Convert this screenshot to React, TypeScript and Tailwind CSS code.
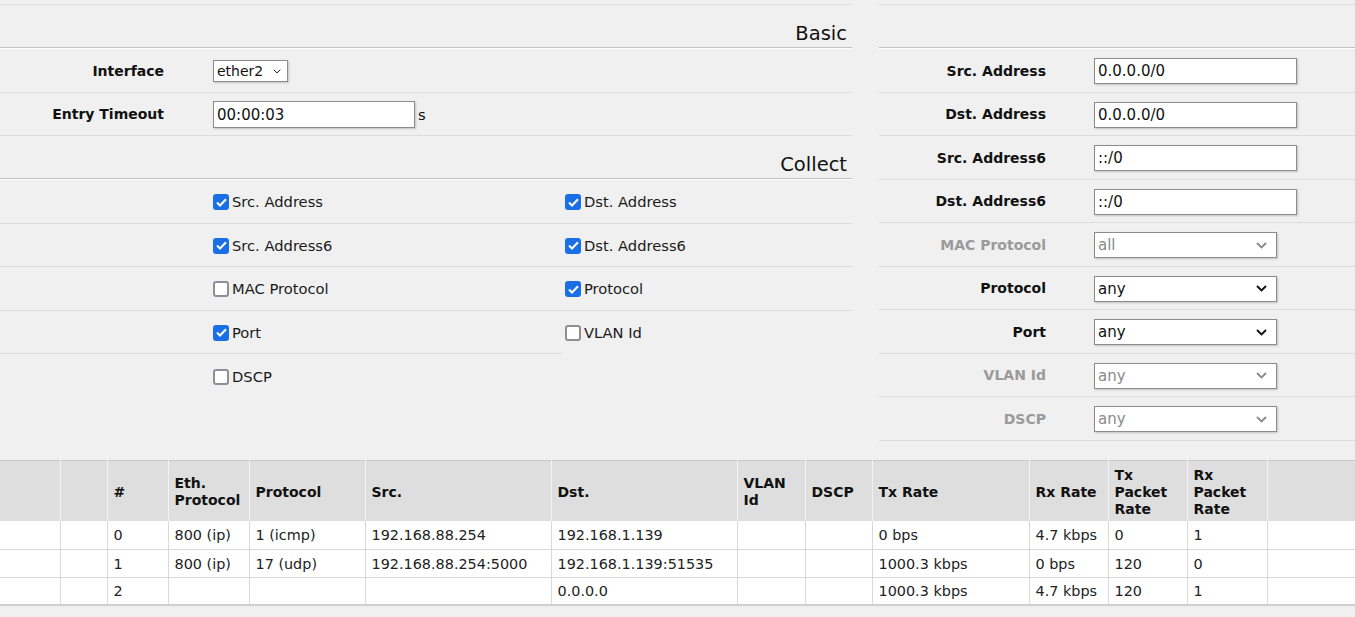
import React from 'react';

const rowCls = 'flex h-[43.5px] items-center border-b border-[#dcdcdc] pt-[2px]';

function Chevron({ muted, thin }: { muted?: boolean; thin?: boolean }) {
  return (
    <svg
      width={thin ? 8 : 11}
      height={thin ? 5 : 7}
      viewBox="0 0 11 7"
      className="shrink-0"
      fill="none"
      stroke={muted ? '#8a8a8a' : '#111'}
      strokeWidth={thin ? 1.4 : 1.9}
    >
      <path d="M1 1 L5.5 5.5 L10 1" />
    </svg>
  );
}

function Select({ value, muted, w, h, thin }: { value: string; muted?: boolean; w: string; h: string; thin?: boolean }) {
  return (
    <div
      className={`flex items-center justify-between border border-[#8c8c8c] bg-white pl-[3px] shadow-[1px_1px_2px_rgba(0,0,0,0.2)] ${
        thin ? 'pr-[6px] text-[14px]' : 'pr-[9px] text-[15px]'
      } ${w} ${h} ${muted ? 'text-[#8a8a8a]' : 'text-[#111]'}`}
    >
      <span>{value}</span>
      <Chevron muted={muted} thin={thin} />
    </div>
  );
}

function TextInput({ value, w, h }: { value: string; w: string; h: string }) {
  return (
    <input
      readOnly
      value={value}
      className={`border border-[#8c8c8c] bg-white px-[3px] text-[15px] text-[#111] shadow-[1px_1px_2px_rgba(0,0,0,0.2)] outline-none ${w} ${h}`}
    />
  );
}

function Check({ on, label }: { on?: boolean; label: string }) {
  return (
    <div className="flex items-center gap-[3px]">
      {on ? (
        <span className="flex h-[16px] w-[16px] items-center justify-center rounded-[3px] bg-[#1a6fe6]">
          <svg width="11" height="9" viewBox="0 0 11 9" fill="none" stroke="#fff" strokeWidth="2">
            <path d="M1 4.5 L4 7.5 L10 1.2" />
          </svg>
        </span>
      ) : (
        <span className="h-[16px] w-[16px] rounded-[3px] border-2 border-[#8e8e98] bg-white" />
      )}
      <span className="text-[14.7px] text-[#1a1a1a]">{label}</span>
    </div>
  );
}

function Heading({ title }: { title?: string }) {
  return (
    <div>
      <div className="flex h-[42px] items-end justify-end pb-[1px] pr-[5px] text-[19.5px] leading-[24px] text-[#111]">
        {title}
      </div>
      <div className="h-px bg-[#c4c4c4]" />
      <div className="h-px bg-white" />
    </div>
  );
}

const rightRows: { label: string; kind: 'input' | 'select'; value: string; muted?: boolean }[] = [
  { label: 'Src. Address', kind: 'input', value: '0.0.0.0/0' },
  { label: 'Dst. Address', kind: 'input', value: '0.0.0.0/0' },
  { label: 'Src. Address6', kind: 'input', value: '::/0' },
  { label: 'Dst. Address6', kind: 'input', value: '::/0' },
  { label: 'MAC Protocol', kind: 'select', value: 'all', muted: true },
  { label: 'Protocol', kind: 'select', value: 'any' },
  { label: 'Port', kind: 'select', value: 'any' },
  { label: 'VLAN Id', kind: 'select', value: 'any', muted: true },
  { label: 'DSCP', kind: 'select', value: 'any', muted: true },
];

const colW = [
  'w-[60px]', 'w-[47px]', 'w-[61px]', 'w-[81px]', 'w-[116px]', 'w-[186px]', 'w-[186px]',
  'w-[68px]', 'w-[67px]', 'w-[157px]', 'w-[79px]', 'w-[79px]', 'w-[80px]', 'w-[88px]',
];

const headers = ['', '', '#', 'Eth. Protocol', 'Protocol', 'Src.', 'Dst.', 'VLAN Id', 'DSCP', 'Tx Rate', 'Rx Rate', 'Tx Packet Rate', 'Rx Packet Rate', ''];

const data = [
  ['0', '800 (ip)', '1 (icmp)', '192.168.88.254', '192.168.1.139', '', '', '0 bps', '4.7 kbps', '0', '1'],
  ['1', '800 (ip)', '17 (udp)', '192.168.88.254:5000', '192.168.1.139:51535', '', '', '1000.3 kbps', '0 bps', '120', '0'],
  ['2', '', '', '', '0.0.0.0', '', '', '1000.3 kbps', '4.7 kbps', '120', '1'],
];

export default function App() {
  return (
    <div className="min-h-screen bg-[#f0f0f0] pt-[4px] font-['DejaVu_Sans',Verdana,sans-serif] text-[14px] text-[#111]">
      <div className="flex items-start">
        {/* Left — Basic + Collect */}
        <div className="w-[852px] border-t border-[#dcdcdc]">
          <Heading title="Basic" />
          <div className={rowCls}>
            <div className="w-[164px] text-right font-bold">Interface</div>
            <div className="ml-[49px]">
              <Select value="ether2" w="w-[75px]" h="h-[22px]" thin />
            </div>
          </div>
          <div className={rowCls}>
            <div className="w-[164px] text-right font-bold">Entry Timeout</div>
            <div className="ml-[49px] flex items-center gap-[3px]">
              <TextInput value="00:00:03" w="w-[202px]" h="h-[27px]" />
              <span className="text-[14.7px]">s</span>
            </div>
          </div>
          <Heading title="Collect" />
          <div className={rowCls}>
            <div className="w-[562px] pl-[213px]"><Check on label="Src. Address" /></div>
            <div className="pl-[3px]"><Check on label="Dst. Address" /></div>
          </div>
          <div className={rowCls}>
            <div className="w-[562px] pl-[213px]"><Check on label="Src. Address6" /></div>
            <div className="pl-[3px]"><Check on label="Dst. Address6" /></div>
          </div>
          <div className={rowCls}>
            <div className="w-[562px] pl-[213px]"><Check label="MAC Protocol" /></div>
            <div className="pl-[3px]"><Check on label="Protocol" /></div>
          </div>
          <div className="flex h-[43.5px]">
            <div className="flex w-[562px] items-center border-b border-[#dcdcdc] pl-[213px] pt-[2px]"><Check on label="Port" /></div>
            <div className="flex items-center pl-[3px] pt-[2px]"><Check label="VLAN Id" /></div>
          </div>
          <div className="flex h-[43.5px] items-center pl-[213px] pt-[2px]">
            <Check label="DSCP" />
          </div>
        </div>

        {/* Right — filters */}
        <div className="ml-[27px] w-[476px] border-t border-[#dcdcdc]">
          <Heading />
          {rightRows.map((r) => (
            <div key={r.label} className={rowCls}>
              <div className={`w-[167px] text-right font-bold ${r.muted ? 'text-[#9a9a9a]' : 'text-[#111]'}`}>{r.label}</div>
              <div className="ml-[48px]">
                {r.kind === 'input' ? (
                  <TextInput value={r.value} w="w-[203px]" h="h-[26px]" />
                ) : (
                  <Select value={r.value} muted={r.muted} w="w-[183px]" h="h-[26px]" />
                )}
              </div>
            </div>
          ))}
        </div>
      </div>

      {/* Flow table */}
      <table className="mt-[19px] w-full table-fixed border-collapse border-b-2 border-t border-b-[#cfcfcf] border-t-[#c9c9c9]">
        <colgroup>
          {colW.map((w, i) => (
            <col key={i} className={w} />
          ))}
        </colgroup>
        <thead>
          <tr className="h-[61px] bg-[#dedede]">
            {headers.map((h, i) => (
              <th
                key={i}
                className="border-r border-[#f3f3f3] px-[6px] pt-[3px] text-left align-middle text-[14px] font-bold leading-[17px] text-[#111]"
              >
                {h}
              </th>
            ))}
          </tr>
        </thead>
        <tbody className="bg-white">
          {data.map((r, i) => (
            <tr key={i} className="h-[28px] border-b border-[#d9d9d9]">
              <td className="border-r border-[#d9d9d9]" />
              <td className="border-r border-[#d9d9d9]" />
              {r.map((c, j) => (
                <td key={j} className="whitespace-nowrap border-r border-[#d9d9d9] px-[6px] pt-[3px] text-[14.4px] text-[#222]">
                  {c}
                </td>
              ))}
              <td />
            </tr>
          ))}
        </tbody>
      </table>
    </div>
  );
}
